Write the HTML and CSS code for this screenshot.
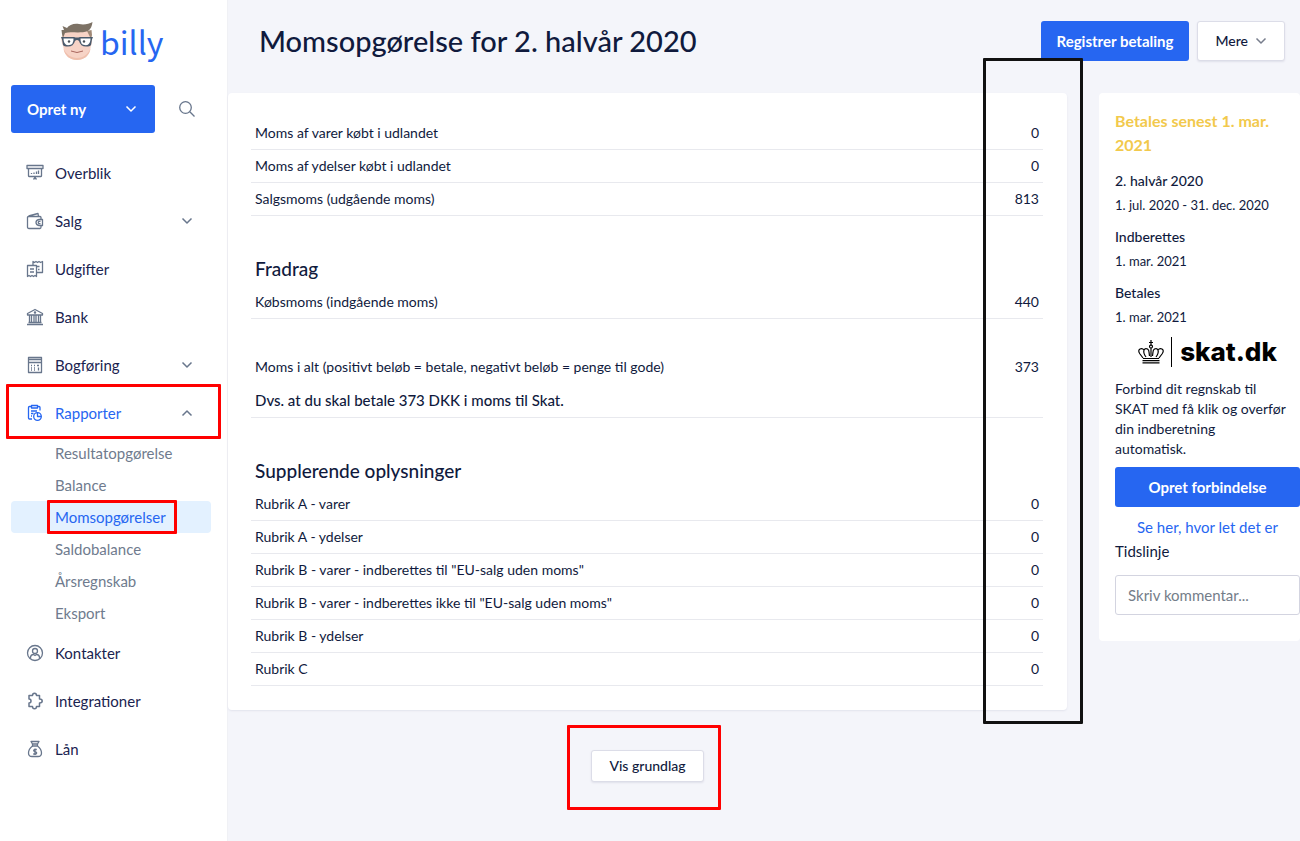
FILE: index.html
```html
<!DOCTYPE html>
<html lang="da">
<head>
<meta charset="utf-8">
<meta name="viewport" content="width=device-width, initial-scale=1">
<title>Momsopgørelse for 2. halvår 2020 - Billy</title>
<link rel="stylesheet" href="styles.css">
</head>
<body>
<div class="app">
  <aside class="sidebar">
    <a class="brand" href="#" aria-label="billy">
      <svg class="brand-face" width="34" height="40" viewBox="0 0 34 40" aria-hidden="true">
        <path d="M3 11C2 15 1 17 1.500 20C2 23 3 24 3.500 27C4 34 10 39 17 39S30 34 30.500 27C31 24 32 23 32 20C32.500 17 31 14 30 11C24 7 8 7 3 11Z" fill="#f7d3c6"/>
        <path d="M3.500 28C5 35 10 39 17 39S29 35 30.500 28C27 34 23 37 17 37S6 33 3.500 28Z" fill="#efc0ad"/>
        <path d="M2 13L1.500 9L4 9L2.500 5L7 7C9 4 14 2 19 3C24 4 29 3 32.500 1C32 5 31 8 28 10C19 13 11 10 5 12L3 17Z" fill="#7d7265"/>
        <path d="M27 10L31.500 9L32 14L31 18Z" fill="#a08977"/>
        <path d="M1 16H14Q17 17 20 16H33L32 18.500L31 24Q30 25.500 26 25.500Q20.500 25.500 19 20Q17 18 15 20Q13.500 25.500 8 25.500Q4 25.500 3 24L2 18.500Z" fill="#4a5a6c"/>
        <path d="M3.500 17.500H13.500Q14 24.300 8 24.300Q3.500 24 3.500 17.500ZM20.500 17.500H30.500Q30.500 24 26 24.300Q20 24.300 20.500 17.500Z" fill="#fff"/>
        <circle cx="9" cy="20.500" r="1.200" fill="#4a5058"/><circle cx="24" cy="20.500" r="1.200" fill="#4a5058"/>
        <path d="M11 30Q17 33 23 30" fill="none" stroke="#a9675f"/>
      </svg>
      <span class="brand-name">billy</span>
    </a>
    <div class="create-row">
      <button class="btn btn-primary btn-create" type="button">Opret ny
        <svg width="12" height="8" viewBox="0 0 12 8" aria-hidden="true"><path d="M1.500 1.500L6 6L10.500 1.500" class="stroke"/></svg>
      </button>
      <button class="btn-search" type="button" aria-label="Søg">
        <svg width="18" height="18" viewBox="0 0 18 18" aria-hidden="true"><g class="stroke"><circle cx="7.500" cy="7.500" r="5.800"/><path d="M11.800 11.800L16.500 16.500"/></g></svg>
      </button>
    </div>
    <nav>
      <ul class="nav">
        <li><a class="nav-link" href="#">
          <svg width="18" height="18" viewBox="0 0 18 18" aria-hidden="true"><g class="stroke"><path d="M1 1.500H17V4.500H1ZM2.500 4.500V12Q2.500 12.500 3 12.500H15Q15.500 12.500 15.500 12V4.500M9 12.500V14M9 13.500L7.500 15.500M9 13.500L10.500 15.500M5.500 10V9M8 10V8.500M10.500 10V7.500M12.500 10V6.500"/></g></svg>
          <span>Overblik</span></a></li>
        <li><a class="nav-link" href="#">
          <svg width="18" height="18" viewBox="0 0 18 18" aria-hidden="true"><g class="stroke"><path d="M2.500 4L12 1.500L12.500 4.500M1.500 5.500Q1.500 4.500 2.500 4.500H14Q15 4.500 15 5.500V7.500M15 13.500V15Q15 16.500 14 16.500H3Q1.500 16.500 1.500 15V5M16.500 7.500H13Q10 8 10 10.500T13 13.500H16.500ZM14.500 9.300H13Q11.500 10.500 13 11.700H14.500"/></g></svg>
          <span>Salg</span>
          <svg class="chevron" width="12" height="8" viewBox="0 0 12 8" aria-hidden="true"><path d="M1.500 1.500L6 6L10.500 1.500" class="stroke"/></svg></a></li>
        <li><a class="nav-link" href="#">
          <svg width="18" height="18" viewBox="0 0 18 18" aria-hidden="true"><g class="stroke"><path d="M1.500 5.500H10.500V16.500L9 15.500L7.500 16.500L6 15.500L4.500 16.500L3 15.500L1.500 16.500ZM7 5.500V1.500L8.500 2.500L10 1.500L11.500 2.500L13 1.500L14.500 2.500L16.500 1.500V12.500H10.500M4 9H8M4 12H8M11 6.500H13.500M12 9.500H13.500"/></g></svg>
          <span>Udgifter</span></a></li>
        <li><a class="nav-link" href="#">
          <svg width="18" height="18" viewBox="0 0 18 18" aria-hidden="true"><g class="stroke"><path d="M1.500 7V5.500L9 1.500L16.500 5.500V7ZM1 16.500H17M2.500 14.500H15.500M3.500 7V14M5.500 7V14M8 7V14M10 7V14M12.500 7V14M14.500 7V14"/><circle cx="9" cy="4.500" r=".6"/></g></svg>
          <span>Bank</span></a></li>
        <li><a class="nav-link" href="#">
          <svg width="18" height="18" viewBox="0 0 18 18" aria-hidden="true"><g class="stroke"><path d="M2.500 1.500H15.500V16.500H2.500ZM2.500 6.500H15.500M2.500 3.500H15.500M5 9.500H6M8 9.500H9M11 9.500H13M5 12H6M8 12H9M5 14H6M8 14H9M12.500 11.500V14.500"/></g></svg>
          <span>Bogføring</span>
          <svg class="chevron" width="12" height="8" viewBox="0 0 12 8" aria-hidden="true"><path d="M1.500 1.500L6 6L10.500 1.500" class="stroke"/></svg></a></li>
        <li><a class="nav-link is-active marked" href="#" aria-expanded="true">
          <svg width="18" height="18" viewBox="0 0 18 18" aria-hidden="true"><g class="stroke"><path d="M5.500 2.500H3.500Q2.500 2.500 2.500 3.500V14Q2.500 15 3.500 15H6M11.500 2.500H13Q14 2.500 14 3.500V6.500M5.500 1.500H11.500V4H5.500ZM5 7H11M5 9.500H7.500M5 12H6"/><circle cx="11.500" cy="12.500" r="3.800"/><path d="M11.500 8.700V12.500H15.300"/></g></svg>
          <span>Rapporter</span>
          <svg class="chevron" width="12" height="8" viewBox="0 0 12 8" aria-hidden="true"><path d="M1.500 6.500L6 2L10.500 6.500" class="stroke"/></svg></a>
          <ul class="subnav">
            <li><a class="sub-link" href="#">Resultatopgørelse</a></li>
            <li><a class="sub-link" href="#">Balance</a></li>
            <li><a class="sub-link is-current" href="#" aria-current="page"><span class="marked">Momsopgørelser</span></a></li>
            <li><a class="sub-link" href="#">Saldobalance</a></li>
            <li><a class="sub-link" href="#">Årsregnskab</a></li>
            <li><a class="sub-link" href="#">Eksport</a></li>
          </ul></li>
        <li><a class="nav-link" href="#">
          <svg width="18" height="18" viewBox="0 0 18 18" aria-hidden="true"><g class="stroke"><circle cx="9" cy="9" r="7.500"/><circle cx="9" cy="7" r="2.500"/><path d="M4.500 14.500V13Q5 10.500 7.500 10.500L9 11.500L10.500 10.500Q13 10.500 13.500 13V14.500"/></g></svg>
          <span>Kontakter</span></a></li>
        <li><a class="nav-link" href="#">
          <svg width="18" height="18" viewBox="0 0 18 18" aria-hidden="true"><path class="stroke" d="M3 3.500H6.500Q6.500 1.200 8.500 1.200T10.500 3.500H13.500V7Q16.200 7 16.200 9T13.500 11V14.500H10.500Q10.500 16.800 8.500 16.800T6.500 14.500H3V11Q5 11 5 9T3 7Z"/></svg>
          <span>Integrationer</span></a></li>
        <li><a class="nav-link" href="#">
          <svg width="18" height="18" viewBox="0 0 18 18" aria-hidden="true"><g class="stroke"><path d="M5 1.500H13L11.500 4H6.500ZM6.500 4V6M11.500 4V6M6.500 6H11.500M6.500 6Q2.500 9 2.500 13Q2.500 16.500 6 16.500H12Q15.500 16.500 15.500 13Q15.500 9 11.500 6M10.800 9.500H8.500Q7.200 10 8 11.200L10 12Q11.300 13 10 14H7.200M9 8.500V15"/></g></svg>
          <span>Lån</span></a></li>
      </ul>
    </nav>
  </aside>

  <main class="main">
    <header class="page-head">
      <h1>Momsopgørelse for 2. halvår 2020</h1>
      <div class="actions">
        <button class="btn btn-primary" type="button">Registrer betaling</button>
        <button class="btn btn-plain" type="button">Mere
          <svg width="12" height="8" viewBox="0 0 12 8" aria-hidden="true"><path d="M1.500 1.500L6 6L10.500 1.500" class="stroke"/></svg>
        </button>
      </div>
    </header>
    <div class="columns">
      <div class="report">
        <section class="card statement">
          <table>
            <tbody>
              <tr><td>Moms af varer købt i udlandet</td><td>0</td></tr>
              <tr><td>Moms af ydelser købt i udlandet</td><td>0</td></tr>
              <tr><td>Salgsmoms (udgående moms)</td><td>813</td></tr>
            </tbody>
          </table>
          <h2>Fradrag</h2>
          <table>
            <tbody>
              <tr><td>Købsmoms (indgående moms)</td><td>440</td></tr>
            </tbody>
          </table>
          <table class="total">
            <tbody>
              <tr><td>Moms i alt (positivt beløb = betale, negativt beløb = penge til gode)</td><td>373</td></tr>
              <tr><td colspan="2"><strong>Dvs. at du skal betale 373 DKK i moms til Skat.</strong></td></tr>
            </tbody>
          </table>
          <h2>Supplerende oplysninger</h2>
          <table>
            <tbody>
              <tr><td>Rubrik A - varer</td><td>0</td></tr>
              <tr><td>Rubrik A - ydelser</td><td>0</td></tr>
              <tr><td>Rubrik B - varer - indberettes til "EU-salg uden moms"</td><td>0</td></tr>
              <tr><td>Rubrik B - varer - indberettes ikke til "EU-salg uden moms"</td><td>0</td></tr>
              <tr><td>Rubrik B - ydelser</td><td>0</td></tr>
              <tr><td>Rubrik C</td><td>0</td></tr>
            </tbody>
          </table>
        </section>
        <div class="basis marked"><button class="btn btn-plain btn-small" type="button">Vis grundlag</button></div>
      </div>

      <aside class="card details">
        <h3 class="due">Betales senest 1. mar. 2021</h3>
        <dl>
          <div><dt>2. halvår 2020</dt><dd>1. jul. 2020 - 31. dec. 2020</dd></div>
          <div><dt>Indberettes</dt><dd>1. mar. 2021</dd></div>
          <div><dt>Betales</dt><dd>1. mar. 2021</dd></div>
        </dl>
        <div class="skat">
          <svg width="26" height="24" viewBox="0 0 26 24" fill="none" stroke="#000" stroke-width="1.200" aria-hidden="true">
            <path d="M13 0V6M11 2.500H15M5 18.500H21M4.500 20.700H21.500M4.500 22.900H21.500M5 18L2 14Q-.5 10.500 2 9Q4.500 8 6 10Q7 8 9.500 9Q11 10 11 12L11.500 16M21 18L24 14Q26.500 10.500 24 9Q21.500 8 20 10Q19 8 16.500 9Q15 10 15 12L14.500 16M6 10Q5 13 8 17M20 10Q21 13 18 17M13 8V17"/>
            <circle cx="13" cy="6.500" r="1.500"/>
          </svg>
          <span class="skat-name">skat.dk</span>
        </div>
        <p>Forbind dit regnskab til<br>SKAT med få klik og overfør<br>din indberetning<br>automatisk.</p>
        <button class="btn btn-primary btn-wide" type="button">Opret forbindelse</button>
        <a class="help-link" href="#">Se her, hvor let det er</a>
        <label for="comment">Tidslinje</label>
        <input id="comment" type="text" placeholder="Skriv kommentar...">
      </aside>
    </div>
  </main>
</div>
</body>
</html>
```
FILE: styles.css
```css
:root {
  --blue: #2666f1;
  --ink: #101a3d;
  --muted: #68768c;
  --line: #e8e9ee;
  --page: #f4f5fa;
  --mark: #ff0000;
}

*, *::after { box-sizing: border-box; }

body {
  margin: 0;
  background: var(--page);
  color: var(--ink);
  font: 14px/24px Lato, "Open Sans", sans-serif;
}

h1, h2, h3, p, ul, dl, dd { margin: 0; padding: 0; }
ul { list-style: none; }
a { color: inherit; text-decoration: none; }
svg { flex: none; display: block; }
.stroke { fill: none; stroke: currentColor; stroke-width: 1.300; stroke-linejoin: round; }
path.stroke { stroke-width: 1.500; }

.app { display: flex; min-height: 100vh; }

.sidebar {
  flex: none;
  width: 228px;
  padding: 21px 16px 16px 11px;
  background: #fff;
  border-right: 1px solid #f0f1f5;
}

.brand {
  display: flex;
  align-items: center;
  gap: 6px;
  height: 40px;
  margin: 0 0 24px 49px;
}
.brand-name {
  color: var(--blue);
  font: 32px/40px "Noto Sans CJK SC", "Noto Sans", sans-serif;
}

.create-row { display: flex; align-items: center; gap: 23px; margin-bottom: 16px; }

.btn {
  display: flex;
  align-items: center;
  justify-content: center;
  height: 40px;
  padding: 0 15px;
  border: 1px solid transparent;
  border-radius: 3px;
  font: 700 15px/24px Lato, sans-serif;
  white-space: nowrap;
}
.btn-primary { background: var(--blue); color: #fff; }
.btn-plain {
  gap: 7px;
  padding: 0 17px;
  background: #fff;
  border-color: #dcdde8;
  box-shadow: 0 1px 2px #dfe0ea;
  color: var(--ink);
  font-size: 14px;
  font-weight: 500;
}
.btn-plain svg { color: #777d8c; }
.btn-create { width: 144px; height: 48px; padding: 0 17px 0 15px; justify-content: space-between; }
.btn-small { height: 32px; }
.btn-wide { width: 100%; }
.btn-search { padding: 0; border: 0; background: none; color: var(--muted); }

.nav-link {
  display: flex;
  align-items: center;
  gap: 11px;
  height: 48px;
  padding: 0 18px 0 15px;
  color: #1a2350;
  font-size: 15px;
}
.nav-link svg { color: var(--muted); }
.nav-link .chevron { margin-left: auto; }
.nav-link.is-active, .nav-link.is-active svg:first-child { color: var(--blue); }

.sub-link {
  display: block;
  padding: 4px 44px;
  border-radius: 4px;
  color: #6f7b8e;
  font-size: 15px;
}
.is-current { background: #e3f1ff; color: var(--blue); }

.marked { position: relative; }
.marked::after {
  content: "";
  position: absolute;
  border: 3px solid var(--mark);
  border-radius: 1px;
  pointer-events: none;
}
.nav-link.marked::after { inset: -5px -10px -2px -5px; }
.is-current .marked::after { inset: -8px -11px -8px -8px; }
.basis.marked::after { inset: 0 7px 0 -1px; }

.main { flex: 1; min-width: 0; }

.page-head {
  display: flex;
  align-items: center;
  justify-content: space-between;
  padding: 21px 15px 32px 31px;
}
h1 { font-size: 29px; line-height: 40px; font-weight: 500; }
.actions { display: flex; gap: 8px; }

.columns { display: flex; align-items: flex-start; gap: 32px; }
.card { background: #fff; border-radius: 4px; }
.report { flex: 1; min-width: 0; }

.statement {
  position: relative;
  padding: 24px 24px 24px 23px;
  box-shadow: 0 1px 2px #e2e3ec;
}
.statement::after {
  content: "";
  position: absolute;
  inset: -35px -16px -14px auto;
  width: 100px;
  border: 3px solid #111;
  border-radius: 1px;
  pointer-events: none;
}

table { width: 100%; border-collapse: collapse; }
td { padding: 4px; border-bottom: 1px solid var(--line); line-height: 24px; }
td:nth-child(2) { text-align: right; }
h2 { padding: 39px 4px 3px; font-size: 19px; line-height: 28px; font-weight: 500; }
.total { margin-top: 32px; }
.total tr:first-child td { border-bottom-color: transparent; }
.total strong { font-size: 15px; font-weight: 500; }

.basis {
  display: flex;
  justify-content: center;
  width: 160px;
  margin: 15px auto 32px;
  padding: 25px 0 28px;
}

.details {
  width: 201px;
  padding: 16px 0 26px 16px;
}
.due { margin-bottom: 12px; color: #f2c94c; font-size: 16px; line-height: 24px; }
dl div { margin-bottom: 8px; }
dt { font-weight: 500; }
dd { font-size: 13px; }
.skat { display: flex; justify-content: center; align-items: center; height: 30px; margin-bottom: 12px; }
.skat-name {
  margin-left: 7px;
  padding-left: 8px;
  border-left: 1px solid #000;
  color: #000;
  font: 800 26px/30px Inter, sans-serif;
}
.details p { margin-bottom: 8px; line-height: 20px; white-space: nowrap; }
.help-link { display: block; padding-top: 8px; color: var(--blue); font-size: 15px; text-align: center; }
label { display: block; margin-bottom: 12px; font-size: 15px; }
input {
  display: block;
  width: 100%;
  height: 40px;
  padding: 0 12px;
  border: 1px solid #d3d4e0;
  border-radius: 3px;
  background: #fff;
  color: var(--ink);
  font: 15px/24px Lato, sans-serif;
}
input::placeholder { color: #747d89; opacity: 1; }
```
